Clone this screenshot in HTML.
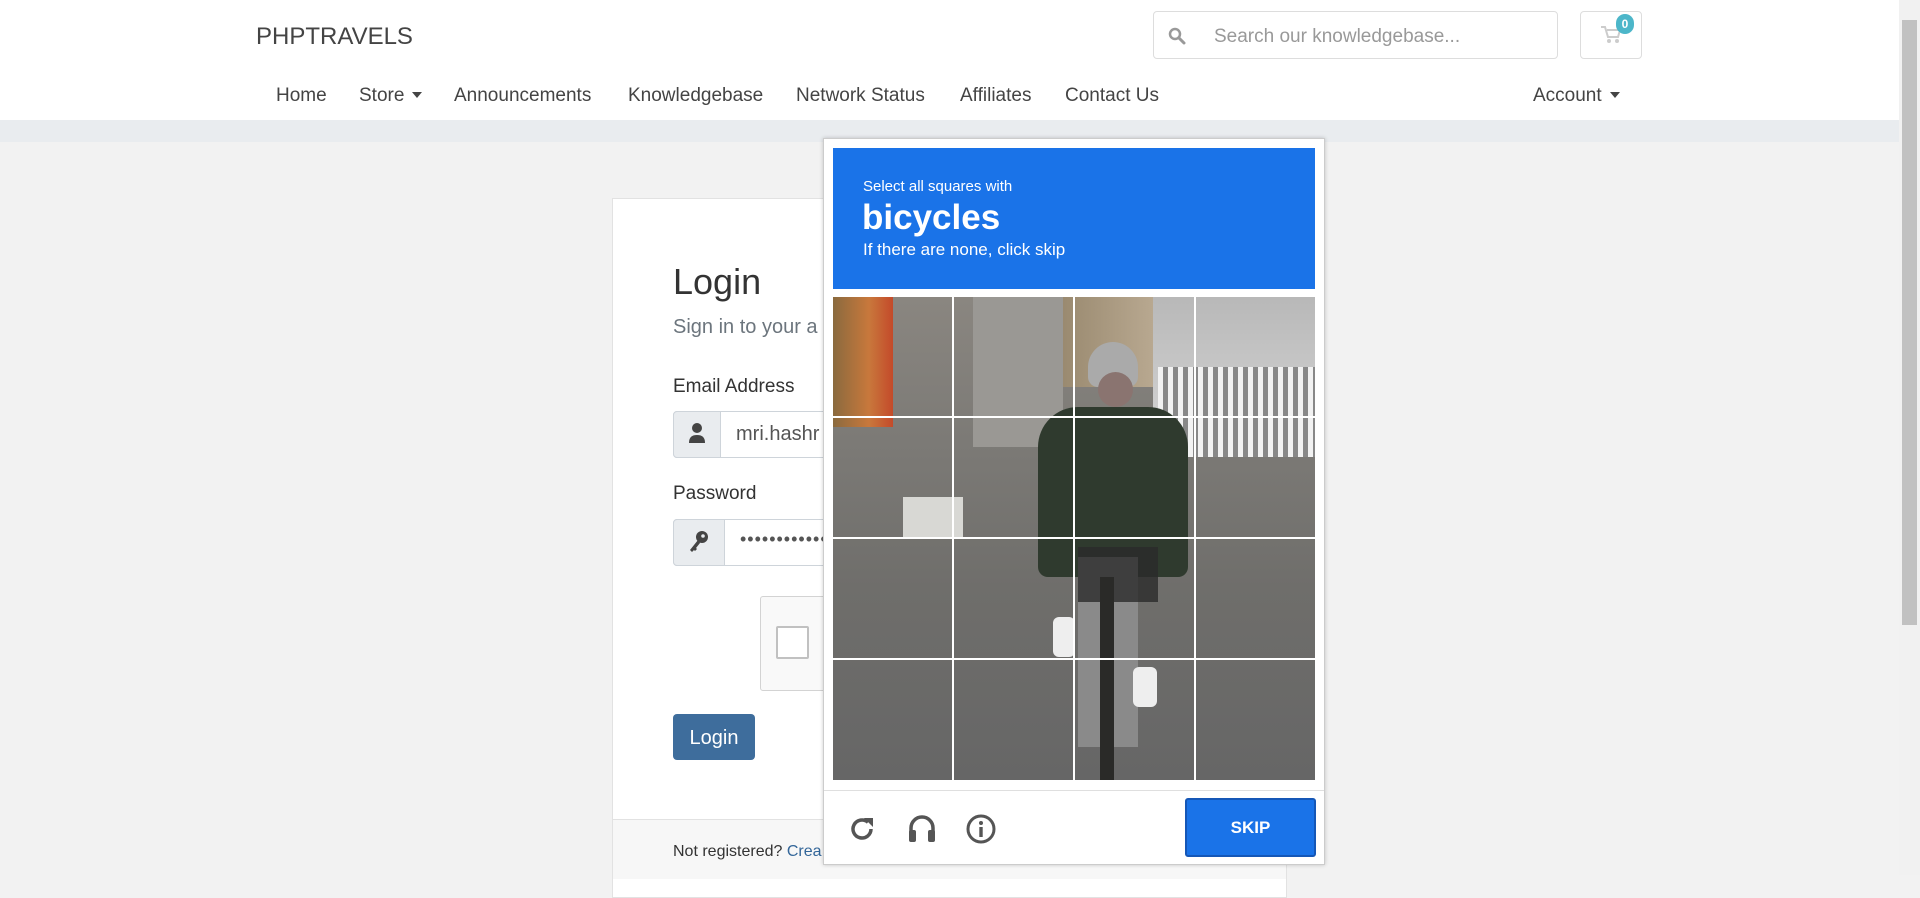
<!DOCTYPE html>
<html><head><meta charset="utf-8"><style>
*{margin:0;padding:0;box-sizing:border-box}
body{width:1920px;height:875px;overflow:hidden;background:#f2f2f2;font-family:"Liberation Sans",sans-serif;position:relative;color:#333}
.a{position:absolute;white-space:nowrap}
.nav{font-size:19px;color:#444;top:85px}
.caret{display:inline-block;border-top:6px solid #444;border-left:5px solid transparent;border-right:5px solid transparent;margin-left:8px;vertical-align:3px}
</style></head><body>
<div class="a" style="left:0;top:0;width:1899px;height:120px;background:#fff"></div>
<div class="a" style="left:0;top:120px;width:1899px;height:22px;background:#e9ecef"></div>
<div class="a" style="left:256px;top:23px;font-size:24px;color:#444">PHPTRAVELS</div>
<div class="a" style="left:1153px;top:11px;width:405px;height:48px;border:1px solid #ddd;border-radius:4px;background:#fff"></div>
<svg class="a" style="left:1168px;top:27px" width="18" height="18" viewBox="0 0 18 18"><circle cx="7" cy="7" r="5" fill="none" stroke="#999" stroke-width="2.5"/><path d="M11 11l5 5" stroke="#999" stroke-width="3" stroke-linecap="round"/></svg>
<div class="a" style="left:1214px;top:26px;font-size:19px;color:#999">Search our knowledgebase...</div>
<div class="a" style="left:1580px;top:11px;width:62px;height:48px;border:1px solid #ddd;border-radius:4px;background:#fff"></div>
<svg class="a" style="left:1600px;top:25px" width="22" height="20" viewBox="0 0 22 20"><path d="M1 2h4l3 10h10l2-7H7" fill="none" stroke="#ccc" stroke-width="2"/><circle cx="9" cy="16" r="2" fill="#ccc"/><circle cx="17" cy="16" r="2" fill="#ccc"/></svg>
<div class="a" style="left:1616px;top:14px;width:18px;height:20px;border-radius:9px;background:#4cb6c9;color:#fff;font-size:12px;font-weight:bold;text-align:center;line-height:20px">0</div>
<div class="a nav" style="left:276px">Home</div>
<div class="a nav" style="left:359px">Store<span class="caret"></span></div>
<div class="a nav" style="left:454px">Announcements</div>
<div class="a nav" style="left:628px">Knowledgebase</div>
<div class="a nav" style="left:796px">Network Status</div>
<div class="a nav" style="left:960px">Affiliates</div>
<div class="a nav" style="left:1065px">Contact Us</div>
<div class="a nav" style="left:1533px">Account<span class="caret"></span></div>
<div class="a" style="left:1899px;top:0;width:21px;height:875px;background:#f1f1f1"></div>
<div class="a" style="left:1902px;top:20px;width:15px;height:605px;background:#c1c1c1"></div>

<div class="a" style="left:612px;top:198px;width:675px;height:700px;background:#fff;border:1px solid #e2e2e2"></div>
<div class="a" style="left:613px;top:819px;width:673px;height:60px;background:#f7f7f7;border-top:1px solid #e2e2e2"></div>
<div class="a" style="left:673px;top:261px;font-size:36px;color:#333">Login</div>
<div class="a" style="left:673px;top:316px;font-size:20px;color:#6c757d">Sign in to your a</div>
<div class="a" style="left:673px;top:376px;font-size:19px;color:#333">Email Address</div>
<div class="a" style="left:673px;top:411px;width:200px;height:47px;border:1px solid #ced4da;border-radius:4px;background:#fff"></div>
<div class="a" style="left:673px;top:411px;width:48px;height:47px;border:1px solid #ced4da;border-radius:4px 0 0 4px;background:#e9ecef"></div>
<svg class="a" style="left:688px;top:422px" width="18" height="22" viewBox="0 0 18 22"><circle cx="9" cy="6" r="5" fill="#444"/><path d="M1 21c0-6 3-8 8-8s8 2 8 8z" fill="#444"/></svg>
<div class="a" style="left:736px;top:423px;font-size:20px;color:#555">mri.hashr</div>
<div class="a" style="left:673px;top:483px;font-size:19px;color:#333">Password</div>
<div class="a" style="left:673px;top:519px;width:200px;height:47px;border:1px solid #ced4da;border-radius:4px;background:#fff"></div>
<div class="a" style="left:673px;top:519px;width:52px;height:47px;border:1px solid #ced4da;border-radius:4px 0 0 4px;background:#e9ecef"></div>
<svg class="a" style="left:688px;top:530px" width="22" height="24" viewBox="0 0 22 24"><circle cx="14" cy="7" r="6" fill="#444"/><path d="M10 10L2 20l2 2 2-2 1 1 2-2-1-1 4-5z" fill="#444"/><circle cx="15" cy="6" r="1.8" fill="#e9ecef"/></svg>
<div class="a" style="left:740px;top:529px;font-size:18px;color:#555;letter-spacing:1px">••••••••••••</div>
<div class="a" style="left:760px;top:596px;width:120px;height:95px;background:#f9f9f9;border:1px solid #d3d3d3;border-radius:3px"></div>
<div class="a" style="left:776px;top:626px;width:33px;height:33px;background:#fff;border:2px solid #c1c1c1;border-radius:2px"></div>
<div class="a" style="left:673px;top:714px;width:82px;height:46px;background:#3e6d9c;border-radius:4px;color:#fff;font-size:20px;text-align:center;line-height:48px">Login</div>
<div class="a" style="left:673px;top:843px;font-size:16px;color:#333">Not registered? <span style="color:#336699">Crea</span></div>

<div class="a" style="left:823px;top:138px;width:502px;height:727px;background:#fff;border:1px solid #ccc;box-shadow:0 0 4px rgba(0,0,0,.2)"></div>
<div class="a" style="left:833px;top:148px;width:482px;height:141px;background:#1a73e8"></div>
<div class="a" style="left:863px;top:178px;font-size:15px;color:#fff">Select all squares with</div>
<div class="a" style="left:862px;top:198px;font-size:35px;font-weight:bold;color:#fff">bicycles</div>
<div class="a" style="left:863px;top:240px;font-size:17px;color:#fff">If there are none, click skip</div>
<div class="a" style="left:833px;top:297px;width:482px;height:483px;overflow:hidden;background:linear-gradient(180deg,#8a8680 0%,#7c7a76 30%,#6f6e6b 60%,#666 100%)">
 <div class="a" style="left:0;top:0;width:60px;height:130px;background:linear-gradient(90deg,#8a6a3e,#c8783c 60%,#c44a2a)"></div>
 <div class="a" style="left:230px;top:0;width:90px;height:90px;background:linear-gradient(90deg,#9a8a70,#b8a890)"></div>
 <div class="a" style="left:320px;top:0;width:162px;height:160px;background:linear-gradient(180deg,#b8b8b8,#d8d8d8)"></div>
 <div class="a" style="left:325px;top:70px;width:157px;height:90px;background:repeating-linear-gradient(90deg,#f2f2f2 0 5px,#888 5px 10px)"></div>
 <div class="a" style="left:140px;top:0;width:90px;height:150px;background:#9a9894"></div>
 <div class="a" style="left:70px;top:200px;width:60px;height:40px;background:#d8d8d4"></div>
 <div class="a" style="left:255px;top:45px;width:50px;height:45px;border-radius:25px 25px 10px 10px;background:#aaa"></div>
 <div class="a" style="left:265px;top:75px;width:35px;height:35px;border-radius:50%;background:#8a7470"></div>
 <div class="a" style="left:205px;top:110px;width:150px;height:170px;border-radius:40px 40px 10px 10px;background:#2f3a2e"></div>
 <div class="a" style="left:245px;top:260px;width:60px;height:190px;background:#8a8a8a"></div>
 <div class="a" style="left:245px;top:250px;width:80px;height:55px;background:#2a2a2a;opacity:.8"></div>
 <div class="a" style="left:267px;top:280px;width:14px;height:203px;background:#2a2a28"></div>
 <div class="a" style="left:220px;top:320px;width:22px;height:40px;background:#eee;border-radius:6px"></div>
 <div class="a" style="left:300px;top:370px;width:24px;height:40px;background:#eee;border-radius:6px"></div>
 <div class="a" style="left:119px;top:0;width:2px;height:483px;background:#fff"></div>
 <div class="a" style="left:240px;top:0;width:2px;height:483px;background:#fff"></div>
 <div class="a" style="left:361px;top:0;width:2px;height:483px;background:#fff"></div>
 <div class="a" style="left:0;top:119px;width:482px;height:2px;background:#fff"></div>
 <div class="a" style="left:0;top:240px;width:482px;height:2px;background:#fff"></div>
 <div class="a" style="left:0;top:361px;width:482px;height:2px;background:#fff"></div>
</div>
<div class="a" style="left:824px;top:790px;width:500px;height:1px;background:#dfdfdf"></div>
<svg class="a" style="left:847px;top:814px" width="30" height="30" viewBox="0 0 30 30"><path d="M24 15a9 9 0 1 1-3-6.7" fill="none" stroke="#555" stroke-width="3.5"/><path d="M17 4h9v9z" fill="#555"/></svg>
<svg class="a" style="left:906px;top:812px" width="32" height="32" viewBox="0 0 32 32"><path d="M5 24v-8a11 11 0 0 1 22 0v8" fill="none" stroke="#555" stroke-width="3.5"/><rect x="3" y="18" width="7" height="12" rx="2" fill="#555"/><rect x="22" y="18" width="7" height="12" rx="2" fill="#555"/></svg>
<svg class="a" style="left:965px;top:813px" width="32" height="32" viewBox="0 0 32 32"><circle cx="16" cy="16" r="13" fill="none" stroke="#555" stroke-width="3"/><circle cx="16" cy="10" r="2" fill="#555"/><rect x="14.3" y="14" width="3.4" height="10" fill="#555"/></svg>
<div class="a" style="left:1185px;top:798px;width:131px;height:59px;background:#1a73e8;border:2px solid #1557b7;border-radius:3px;color:#fff;font-weight:bold;font-size:17px;text-align:center;line-height:55px">SKIP</div>
</body></html>
